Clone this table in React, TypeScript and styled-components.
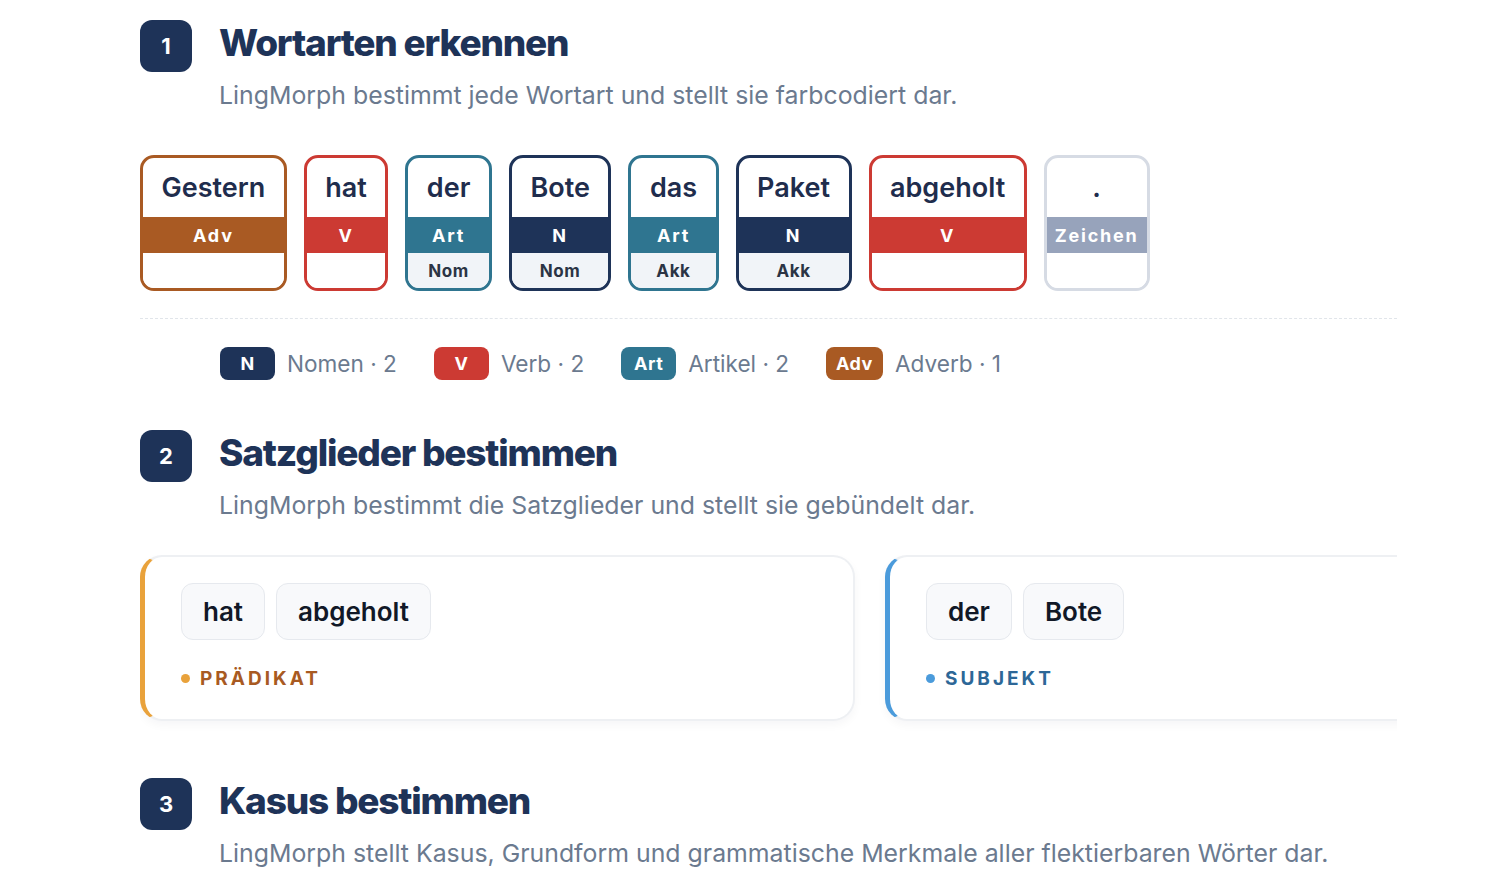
import styled, { createGlobalStyle } from "styled-components";

const NAVY = "#1e3358";
const RED = "#cc3a33";
const TEAL = "#2f7590";
const BROWN = "#a95a23";
const GRAY = "#97a3bb";
const MUTED = "#6b7a8f";

type Tag = { label: string; color: string; border: string };

const TAGS: Record<string, Tag> = {
  N: { label: "N", color: NAVY, border: NAVY },
  V: { label: "V", color: RED, border: RED },
  Art: { label: "Art", color: TEAL, border: TEAL },
  Adv: { label: "Adv", color: BROWN, border: BROWN },
  Zeichen: { label: "Zeichen", color: GRAY, border: "#d6dbe4" },
};

const words = [
  { word: "Gestern", tag: "Adv", kasus: "" },
  { word: "hat", tag: "V", kasus: "" },
  { word: "der", tag: "Art", kasus: "Nom" },
  { word: "Bote", tag: "N", kasus: "Nom" },
  { word: "das", tag: "Art", kasus: "Akk" },
  { word: "Paket", tag: "N", kasus: "Akk" },
  { word: "abgeholt", tag: "V", kasus: "" },
  { word: ".", tag: "Zeichen", kasus: "" },
];

const legend = [
  { tag: "N", text: "Nomen · 2" },
  { tag: "V", text: "Verb · 2" },
  { tag: "Art", text: "Artikel · 2" },
  { tag: "Adv", text: "Adverb · 1" },
];

const satzglieder = [
  { words: ["hat", "abgeholt"], label: "Prädikat", accent: "#e9a23b", text: "#a85a22" },
  { words: ["der", "Bote"], label: "Subjekt", accent: "#4b9bdb", text: "#2d6797" },
];

const GlobalStyle = createGlobalStyle`
  body {
    margin: 0;
    background: #ffffff;
    font-family: Inter, "Noto Sans", sans-serif;
  }
`;

const Page = styled.div`
  width: 1257px;
  padding: 20px 0 0 140px;
`;

const Section = styled.section<{ $top: number }>`
  margin-top: ${p => p.$top}px;
`;

const Header = styled.div`
  display: flex;
  align-items: flex-start;
  gap: 27px;
`;

const Badge = styled.div`
  width: 52px;
  height: 52px;
  flex-shrink: 0;
  border-radius: 12px;
  background: ${NAVY};
  color: #fff;
  display: flex;
  align-items: center;
  justify-content: center;
  font-size: 22px;
  font-weight: 700;
`;

const Titles = styled.div`
  display: flex;
  flex-direction: column;
`;

const Title = styled.h2`
  margin: 0;
  font-size: 37px;
  line-height: 46px;
  font-weight: 800;
  letter-spacing: -1.2px;
  color: ${NAVY};
`;

const Subtitle = styled.p`
  margin: 13px 0 0;
  font-size: 24.85px;
  line-height: 32px;
  font-weight: 400;
  color: ${MUTED};
`;

const WordRow = styled.div`
  display: flex;
  gap: 17px;
  margin-top: 44px;
`;

const WordCard = styled.div<{ $border: string }>`
  display: flex;
  flex-direction: column;
  border: 3px solid ${p => p.$border};
  border-radius: 14px;
  overflow: hidden;
  background: #fff;
`;

const Word = styled.div`
  height: 59px;
  padding: 0 18.5px;
  display: flex;
  align-items: center;
  justify-content: center;
  font-size: 27px;
  font-weight: 600;
  color: #1f2d4d;
  white-space: nowrap;
`;

const TagBand = styled.div<{ $color: string }>`
  height: 36px;
  display: flex;
  align-items: center;
  justify-content: center;
  background: ${p => p.$color};
  color: #fff;
  font-size: 18px;
  font-weight: 700;
  letter-spacing: 1.8px;
  padding: 0 8px;
`;

const Kasus = styled.div<{ $filled: boolean }>`
  height: 35px;
  display: flex;
  align-items: center;
  justify-content: center;
  background: ${p => (p.$filled ? "#f1f4f8" : "#fff")};
  color: #2b3445;
  font-size: 17px;
  font-weight: 700;
  letter-spacing: 0.6px;
`;

const Divider = styled.hr`
  margin: 27px 0 0;
  border: 0;
  border-top: 1.5px dashed #e1e5ea;
`;

const Legend = styled.div`
  display: flex;
  align-items: center;
  gap: 37px;
  margin: 28px 0 0 80px;
`;

const LegendItem = styled.div`
  display: flex;
  align-items: center;
  gap: 12px;
`;

const Pill = styled.span<{ $color: string }>`
  min-width: 55px;
  height: 33px;
  padding: 0 10px;
  box-sizing: border-box;
  border-radius: 8px;
  background: ${p => p.$color};
  color: #fff;
  display: flex;
  align-items: center;
  justify-content: center;
  font-size: 18px;
  font-weight: 700;
  letter-spacing: 0.5px;
`;

const LegendText = styled.span`
  font-size: 22.6px;
  color: ${MUTED};
`;

const GroupRow = styled.div`
  display: flex;
  gap: 30px;
  margin-top: 34px;
  overflow: hidden;
  padding-bottom: 12px;
`;

const GroupCard = styled.div<{ $accent: string }>`
  width: 715px;
  flex-shrink: 0;
  box-sizing: border-box;
  height: 166px;
  padding: 26px 36px 29px;
  border: 2px solid #eef0f3;
  border-left: 5px solid ${p => p.$accent};
  border-radius: 22px;
  background: #fff;
  box-shadow: 0 4px 10px rgba(20, 30, 50, 0.04);
`;

const Chips = styled.div`
  display: flex;
  gap: 11px;
`;

const Chip = styled.div`
  height: 57px;
  padding: 0 21px;
  box-sizing: border-box;
  display: flex;
  align-items: center;
  border: 1.5px solid #e6e9ee;
  border-radius: 12px;
  background: #f8f9fb;
  font-size: 26px;
  font-weight: 600;
  color: #111827;
`;

const GroupLabel = styled.div<{ $accent: string; $color: string }>`
  display: flex;
  align-items: center;
  gap: 10px;
  margin-top: 26px;
  height: 24px;
  font-size: 19px;
  font-weight: 700;
  letter-spacing: 3px;
  text-transform: uppercase;
  color: ${p => p.$color};

  &::before {
    content: "";
    width: 9px;
    height: 9px;
    border-radius: 50%;
    background: ${p => p.$accent};
  }
`;

const SectionHeader = ({ n, title, text }: { n: number; title: string; text: string }) => (
  <Header>
    <Badge>{n}</Badge>
    <Titles>
      <Title>{title}</Title>
      <Subtitle>{text}</Subtitle>
    </Titles>
  </Header>
);

export default function App() {
  return (
    <Page>
      <GlobalStyle />
      <Section $top={0}>
        <SectionHeader
          n={1}
          title="Wortarten erkennen"
          text="LingMorph bestimmt jede Wortart und stellt sie farbcodiert dar."
        />
        <WordRow>
          {words.map((w, i) => {
            const t = TAGS[w.tag];
            return (
              <WordCard key={i} $border={t.border}>
                <Word>{w.word}</Word>
                <TagBand $color={t.color}>{t.label}</TagBand>
                <Kasus $filled={!!w.kasus}>{w.kasus}</Kasus>
              </WordCard>
            );
          })}
        </WordRow>
        <Divider />
        <Legend>
          {legend.map(l => (
            <LegendItem key={l.tag}>
              <Pill $color={TAGS[l.tag].color}>{l.tag}</Pill>
              <LegendText>{l.text}</LegendText>
            </LegendItem>
          ))}
        </Legend>
      </Section>

      <Section $top={50}>
        <SectionHeader
          n={2}
          title="Satzglieder bestimmen"
          text="LingMorph bestimmt die Satzglieder und stellt sie gebündelt dar."
        />
        <GroupRow>
          {satzglieder.map(g => (
            <GroupCard key={g.label} $accent={g.accent}>
              <Chips>
                {g.words.map(w => (
                  <Chip key={w}>{w}</Chip>
                ))}
              </Chips>
              <GroupLabel $accent={g.accent} $color={g.text}>
                {g.label}
              </GroupLabel>
            </GroupCard>
          ))}
        </GroupRow>
      </Section>

      <Section $top={45}>
        <SectionHeader
          n={3}
          title="Kasus bestimmen"
          text="LingMorph stellt Kasus, Grundform und grammatische Merkmale aller flektierbaren Wörter dar."
        />
      </Section>
    </Page>
  );
}
